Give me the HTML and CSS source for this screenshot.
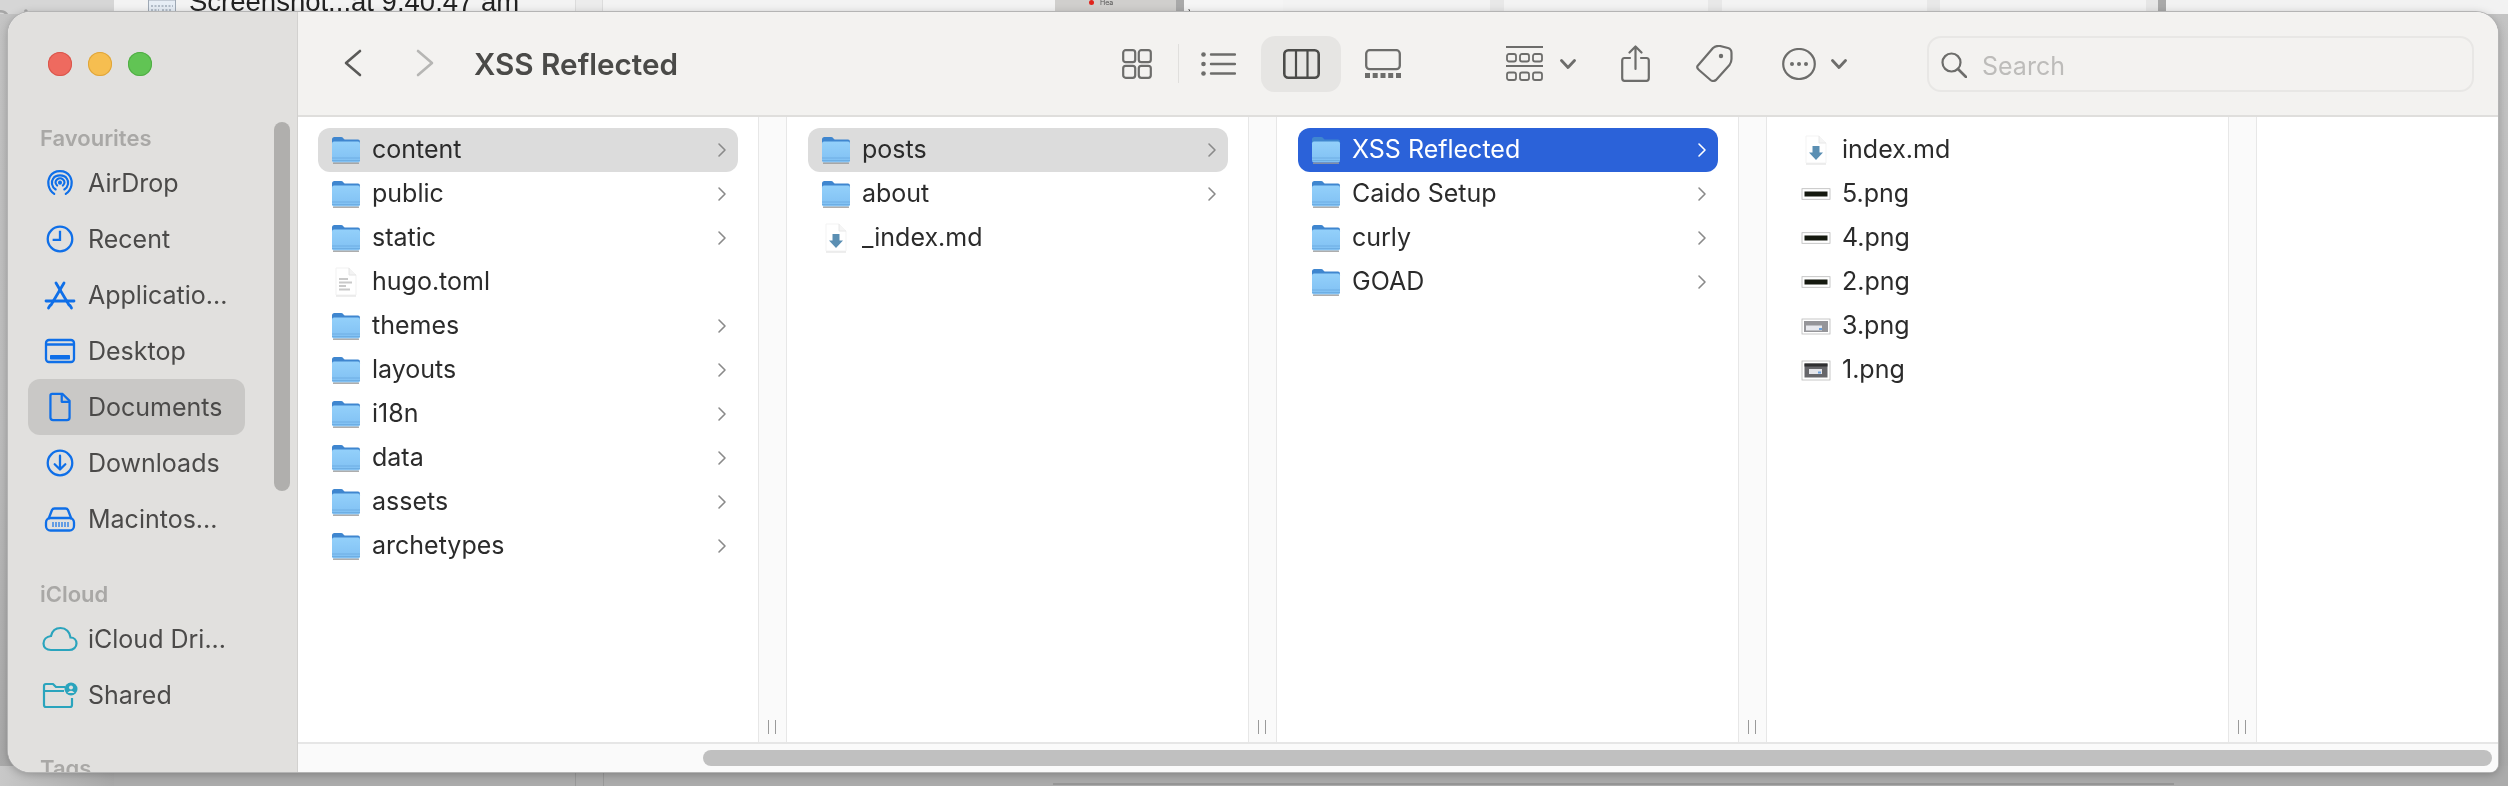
FILE: index.html
```html
<!DOCTYPE html>
<html lang="en">
<head>
<meta charset="utf-8">
<title>XSS Reflected</title>
<link rel="stylesheet" href="styles.css">
</head>
<body>
<svg class="defs" width="0" height="0" aria-hidden="true">
  <defs>
    <linearGradient id="fbody" x1="0" y1="0" x2="0" y2="1"><stop offset="0" stop-color="#93d0fa"/><stop offset="1" stop-color="#80c0f3"/></linearGradient>
    <symbol id="folder" viewBox="0 0 30 28">
      <path d="M1 3.500Q1 1 3.500 1H10Q11.500 1 12.500 2.400L13.600 3.600H27Q29 3.600 29 6V12H1Z" fill="#3f86cf"/>
      <rect x="1" y="5.600" width="28" height="21" rx="2" fill="url(#fbody)"/>
      <rect x="1" y="21.500" width="28" height="1" fill="#6eaee3"/>
      <rect x="1" y="24" width="28" height="1" fill="#6eaee3"/>
      <rect x="2" y="26.600" width="26" height="1.200" fill="#9a9a9a"/>
    </symbol>
    <symbol id="doc" viewBox="0 0 24 30">
      <path d="M2 1H15L22 8V28H2Z" fill="#fff" stroke="#f1f1f1"/>
      <path d="M15 1V8H22" fill="#f3f3f3" stroke="#e4e4e4"/>
      <path d="M2 29H22" stroke="#dedede"/>
      <path d="M5 12H14M5 15.500H18M5 19H12M5 22.500H16" stroke="#c9c9c9" stroke-width="1.800"/>
    </symbol>
    <symbol id="md" viewBox="0 0 24 30">
      <path d="M2 1H15L22 8V28H2Z" fill="#fff" stroke="#f3f3f3"/>
      <path d="M15 1V8H22" fill="#f5f5f5" stroke="#e8e8e8"/>
      <path d="M2 29H22" stroke="#dedede"/>
      <path d="M8.500 11H15.500V17.500H19L12 25L5 17.500H8.500Z" fill="#5b8fb3"/>
    </symbol>
    <symbol id="strip" viewBox="0 0 30 12">
      <rect x="1" y=".7" width="28" height="10.600" fill="#fff" stroke="#b9b9b9" stroke-width=".8"/>
      <rect x="3.500" y="3.500" width="23" height="5" fill="#15190f"/>
    </symbol>
    <symbol id="thumb3" viewBox="0 0 30 17">
      <rect x="1" y="1" width="28" height="15" fill="#fff" stroke="#b9b9b9" stroke-width=".8"/>
      <rect x="3" y="3" width="24" height="11" fill="#959599"/>
      <rect x="5" y="7.500" width="16" height="5" fill="#e8e9ee"/>
      <rect x="18" y="10" width="3" height="2" fill="#6aa0dc"/>
    </symbol>
    <symbol id="thumb1" viewBox="0 0 30 21">
      <rect x="1" y="1" width="28" height="19" fill="#fff" stroke="#b9b9b9" stroke-width=".8"/>
      <rect x="3.500" y="3.500" width="23" height="14" fill="#66666a"/>
      <rect x="3.500" y="3.500" width="23" height="3" fill="#2f2f31"/>
      <rect x="8" y="9" width="13" height="5" fill="#e4e5ea"/>
      <rect x="17" y="11.500" width="3" height="2" fill="#6aa0dc"/>
    </symbol>
    <symbol id="chev" viewBox="0 0 12 18">
      <path d="M3 3L9 9L3 15" fill="none" stroke="#8a8a8a" stroke-width="1.600" stroke-linecap="round" stroke-linejoin="round"/>
    </symbol>
  </defs>
</svg>

<div class="desktop">
  <div class="strip-top">
    <div class="seg seg-a"><span class="ghost">Ori</span></div>
    <div class="seg seg-b">
      <svg class="shot-thumb" viewBox="0 0 28 14"><rect x=".5" y="0" width="27" height="14" fill="#e6edf5" stroke="#9fa9b5"/><path d="M3 6H25M3 10H11M14 10H24" stroke="#7f8c9c" stroke-dasharray="2 1.500"/></svg>
      <span class="shot-name">Screenshot...at 9.40.47 am</span>
    </div>
    <div class="seg seg-c"></div>
    <div class="seg seg-d"></div>
    <div class="seg seg-e"><span class="red-dot"></span><span class="mini">Hea</span></div>
    <div class="seg seg-f"></div>
    <div class="seg seg-g"><span class="mini-dark">)</span></div>
    <div class="seg seg-h"></div>
    <div class="seg seg-i"></div>
    <div class="seg seg-j"></div>
    <div class="seg seg-k"></div>
    <div class="seg seg-l"></div>
    <div class="seg seg-m"></div>
    <div class="seg seg-n"></div>
    <div class="seg seg-f"></div>
    <div class="seg seg-o"></div>
  </div>
  <div class="strip-bottom">
    <div class="bseg bseg-a"></div>
    <div class="bseg bseg-b"></div>
    <div class="bseg bseg-d"></div>
    <div class="bseg bseg-c"><span class="bbar"></span></div>
  </div>

  <main class="window">
    <aside class="sidebar">
      <div class="lights"><span class="light red"></span><span class="light yellow"></span><span class="light green"></span></div>

      <h2 class="side-head head-first">Favourites</h2>
      <ul class="side-list">
        <li class="side-row"><svg class="side-icon" viewBox="-5 -6 46 50"><g fill="none" stroke="#0f6fe8" stroke-width="3" stroke-linecap="round"><path d="M10 34C1 28 0 17 4 10C10 0 26 0 32 10C36 17 35 28 26 34"/><path d="M12 28C6 24 5.500 17 8.500 13C12 7 24 7 27.500 13C30.500 17 30 24 24 28"/><path d="M14 22.500C11 20 11 16 14 14C16.500 12 20 12 22 14C25 16 25 20 22 22.500"/></g><circle cx="18" cy="18.500" r="2.800" fill="#0f6fe8"/></svg><span>AirDrop</span></li>
        <li class="side-row"><svg class="side-icon" viewBox="-4 -4 44 44"><g fill="none" stroke="#0f6fe8" stroke-width="2.800"><circle cx="18" cy="18" r="15"/><path d="M18 8V19H9"/></g></svg><span>Recent</span></li>
        <li class="side-row"><svg class="side-icon" viewBox="0 0 36 36"><g fill="none" stroke="#0f6fe8" stroke-width="2.800" stroke-linecap="round"><path d="M14 6L27 28"/><path d="M22 6L9 28"/><path d="M4 24H32"/><path d="M6.500 31L8 28.500M29.500 31L28 28.500"/></g></svg><span>Applicatio...</span></li>
        <li class="side-row"><svg class="side-icon" viewBox="0 0 36 36"><g fill="none" stroke="#0f6fe8" stroke-width="2.300"><rect x="4" y="7" width="28" height="22" rx="3"/><path d="M4 11.500H32"/></g><rect x="8" y="22" width="20" height="4.500" rx=".8" fill="#0f6fe8"/></svg><span>Desktop</span></li>
        <li class="side-row side-row-on"><svg class="side-icon" viewBox="-2.700 -2.700 41.400 41.400"><g fill="none" stroke="#0f6fe8" stroke-width="2.600" stroke-linejoin="round"><path d="M9 3H21L29 11V30Q29 33 26 33H10Q7 33 7 30V5Q7 3 9 3Z"/><path d="M20 3V12H29"/></g></svg><span>Documents</span></li>
        <li class="side-row"><svg class="side-icon" viewBox="-4 -4 44 44"><g fill="none" stroke="#0f6fe8" stroke-width="2.800" stroke-linecap="round" stroke-linejoin="round"><circle cx="18" cy="18" r="15"/><path d="M18 9V26M11.500 19.500L18 26L24.500 19.500"/></g></svg><span>Downloads</span></li>
        <li class="side-row"><svg class="side-icon" viewBox="0 0 36 36"><g fill="none" stroke="#0f6fe8" stroke-width="2.300" stroke-linejoin="round"><path d="M6.500 18L10 9Q10.700 7.500 12.500 7.500H23.500Q25.300 7.500 26 9L29.500 18"/><rect x="4" y="17" width="28" height="12.500" rx="4.500"/><path d="M11 21V26M14 21V26M17 21V26M20 21V26M23 21V26M26 21V26" stroke-width="1.200"/></g></svg><span>Macintos...</span></li>
      </ul>

      <h2 class="side-head head-next">iCloud</h2>
      <ul class="side-list">
        <li class="side-row"><svg class="side-icon" viewBox="0 0 36 36"><path d="M9 29H27C31.500 29 34.500 26 34.500 22.500C34.500 19 32 16.500 28.500 16.500C28 11 24 7 18.500 7C13 7 10 10.500 9 15C4.500 15.500 1.500 18.500 1.500 22.500C1.500 26.500 4.500 29 9 29Z" fill="none" stroke="#2aa4bd" stroke-width="2.200"/></svg><span>iCloud Dri...</span></li>
        <li class="side-row"><svg class="side-icon" viewBox="0 0 36 36"><g fill="none" stroke="#2aa4bd" stroke-width="2.200" stroke-linejoin="round"><path d="M30 21V28Q30 30 28 30H4Q2 30 2 28V9Q2 7 4 7H11L14 10H23"/><path d="M2 14H22"/></g><circle cx="29" cy="12" r="6.500" fill="#2aa4bd"/><circle cx="29" cy="10.500" r="2" fill="#e1e0de"/><path d="M25.500 16Q29 11.500 32.500 16Z" fill="#e1e0de"/></svg><span>Shared</span></li>
      </ul>

      <h2 class="side-head head-tags">Tags</h2>
      <div class="side-thumb"></div>
    </aside>

    <section class="main">
      <header class="toolbar">
        <svg class="nav-btn" viewBox="0 0 20 30"><path d="M17 3L3 15L17 27" fill="none" stroke="#5a5a58" stroke-width="2.600" stroke-linecap="round" stroke-linejoin="round"/></svg>
        <svg class="nav-btn nav-fwd" viewBox="0 0 20 30"><path d="M3 3L17 15L3 27" fill="none" stroke="#b6b6b4" stroke-width="2.600" stroke-linecap="round" stroke-linejoin="round"/></svg>
        <h1 class="title">XSS Reflected</h1>
        <div class="spacer"></div>
        <svg class="tb ic-grid" viewBox="0 0 30 30"><g fill="none" stroke="#6d6d6b" stroke-width="2.200"><rect x="1.200" y="1.200" width="12" height="12" rx="2.500"/><rect x="16.800" y="1.200" width="12" height="12" rx="2.500"/><rect x="1.200" y="16.800" width="12" height="12" rx="2.500"/><rect x="16.800" y="16.800" width="12" height="12" rx="2.500"/></g></svg>
        <span class="tb-div"></span>
        <svg class="tb ic-list" viewBox="0 0 35 24"><g fill="#6d6d6b"><circle cx="2.500" cy="2.500" r="2.300"/><circle cx="2.500" cy="12" r="2.300"/><circle cx="2.500" cy="21.500" r="2.300"/></g><path d="M10 2.500H34M10 12H34M10 21.500H34" stroke="#6d6d6b" stroke-width="2.400" stroke-linecap="round"/></svg>
        <div class="tb-active"><svg class="ic-cols" viewBox="0 0 37 30"><g fill="none" stroke="#4c4c4a" stroke-width="2.600"><rect x="1.300" y="1.300" width="34.400" height="27.400" rx="4"/><path d="M13 1.300V28.700M24.500 1.300V28.700" stroke-width="2.200"/></g></svg></div>
        <svg class="tb ic-gal" viewBox="0 0 36 29"><rect x="1.200" y="1.200" width="33.600" height="19" rx="3.500" fill="none" stroke="#6d6d6b" stroke-width="2.300"/><g fill="#6d6d6b"><rect x="0" y="24" width="5" height="5"/><rect x="7.700" y="24" width="5" height="5"/><rect x="15.500" y="24" width="5" height="5"/><rect x="23.200" y="24" width="5" height="5"/><rect x="31" y="24" width="5" height="5"/></g></svg>
        <svg class="tb ic-group" viewBox="0 0 37 35"><path d="M0 1H37M0 20H37" stroke="#6d6d6b" stroke-width="2.200"/><g fill="none" stroke="#6d6d6b" stroke-width="1.800"><rect x="1" y="8" width="9" height="7.500" rx="2"/><rect x="14" y="8" width="9" height="7.500" rx="2"/><rect x="27" y="8" width="9" height="7.500" rx="2"/><rect x="1" y="26.500" width="9" height="7.500" rx="2"/><rect x="14" y="26.500" width="9" height="7.500" rx="2"/><rect x="27" y="26.500" width="9" height="7.500" rx="2"/></g></svg>
        <svg class="tb ic-mini ic-mini-a" viewBox="0 0 16 10"><path d="M1.500 1.500L8 8.500L14.500 1.500" fill="none" stroke="#6d6d6b" stroke-width="2.800" stroke-linecap="round" stroke-linejoin="round"/></svg>
        <svg class="tb ic-share" viewBox="0 0 29 37"><g fill="none" stroke="#6d6d6b" stroke-width="2.200" stroke-linecap="round" stroke-linejoin="round"><path d="M9 13H3.500Q1.200 13 1.200 15.500V33Q1.200 35.800 3.500 35.800H25.500Q27.800 35.800 27.800 33V15.500Q27.800 13 25.500 13H20"/><path d="M14.500 1.500V24M8.500 7.500L14.500 1.500L20.500 7.500"/></g></svg>
        <svg class="tb ic-tag" viewBox="0 0 37 37"><path d="M1.500 21L17 3Q20 .5 24 1L32 3Q35.500 4 35.500 8V14Q35.500 17 33.500 20L20 35Q17 37 14.500 35L3 25Q.5 23 1.500 21Z" fill="none" stroke="#6d6d6b" stroke-width="2.200" stroke-linejoin="round"/><circle cx="25" cy="11" r="2.200" fill="#6d6d6b"/></svg>
        <svg class="tb ic-more" viewBox="0 0 34 32"><ellipse cx="17" cy="16" rx="15.800" ry="15" fill="none" stroke="#6d6d6b" stroke-width="2.200"/><g fill="#6d6d6b"><circle cx="10" cy="16" r="2"/><circle cx="17" cy="16" r="2"/><circle cx="24" cy="16" r="2"/></g></svg>
        <svg class="tb ic-mini ic-mini-b" viewBox="0 0 16 10"><path d="M1.500 1.500L8 8.500L14.500 1.500" fill="none" stroke="#6d6d6b" stroke-width="2.800" stroke-linecap="round" stroke-linejoin="round"/></svg>
        <div class="search">
          <svg class="ic-search" viewBox="0 0 26 26"><circle cx="10.500" cy="10.500" r="9" fill="none" stroke="#6d6d6b" stroke-width="2.200"/><path d="M17 17L25 25" stroke="#6d6d6b" stroke-width="2.600" stroke-linecap="round"/></svg>
          <span class="search-text">Search</span>
        </div>
      </header>

      <div class="browser">
        <div class="col col-first">
          <div class="row row-open"><svg class="ic-folder"><use href="#folder"/></svg><span class="name">content</span><svg class="ic-chev"><use href="#chev"/></svg></div>
          <div class="row"><svg class="ic-folder"><use href="#folder"/></svg><span class="name">public</span><svg class="ic-chev"><use href="#chev"/></svg></div>
          <div class="row"><svg class="ic-folder"><use href="#folder"/></svg><span class="name">static</span><svg class="ic-chev"><use href="#chev"/></svg></div>
          <div class="row"><svg class="ic-doc"><use href="#doc"/></svg><span class="name">hugo.toml</span></div>
          <div class="row"><svg class="ic-folder"><use href="#folder"/></svg><span class="name">themes</span><svg class="ic-chev"><use href="#chev"/></svg></div>
          <div class="row"><svg class="ic-folder"><use href="#folder"/></svg><span class="name">layouts</span><svg class="ic-chev"><use href="#chev"/></svg></div>
          <div class="row"><svg class="ic-folder"><use href="#folder"/></svg><span class="name">i18n</span><svg class="ic-chev"><use href="#chev"/></svg></div>
          <div class="row"><svg class="ic-folder"><use href="#folder"/></svg><span class="name">data</span><svg class="ic-chev"><use href="#chev"/></svg></div>
          <div class="row"><svg class="ic-folder"><use href="#folder"/></svg><span class="name">assets</span><svg class="ic-chev"><use href="#chev"/></svg></div>
          <div class="row"><svg class="ic-folder"><use href="#folder"/></svg><span class="name">archetypes</span><svg class="ic-chev"><use href="#chev"/></svg></div>
        </div>
        <div class="handle"><i></i></div>
        <div class="col">
          <div class="row row-open"><svg class="ic-folder"><use href="#folder"/></svg><span class="name">posts</span><svg class="ic-chev"><use href="#chev"/></svg></div>
          <div class="row"><svg class="ic-folder"><use href="#folder"/></svg><span class="name">about</span><svg class="ic-chev"><use href="#chev"/></svg></div>
          <div class="row"><svg class="ic-doc"><use href="#md"/></svg><span class="name">_index.md</span></div>
        </div>
        <div class="handle"><i></i></div>
        <div class="col">
          <div class="row row-sel"><svg class="ic-folder"><use href="#folder"/></svg><span class="name">XSS Reflected</span><svg class="ic-chev" viewBox="0 0 12 18"><path d="M3 3L9 9L3 15" fill="none" stroke="#fff" stroke-width="1.600" stroke-linecap="round" stroke-linejoin="round"/></svg></div>
          <div class="row"><svg class="ic-folder"><use href="#folder"/></svg><span class="name">Caido Setup</span><svg class="ic-chev"><use href="#chev"/></svg></div>
          <div class="row"><svg class="ic-folder"><use href="#folder"/></svg><span class="name">curly</span><svg class="ic-chev"><use href="#chev"/></svg></div>
          <div class="row"><svg class="ic-folder"><use href="#folder"/></svg><span class="name">GOAD</span><svg class="ic-chev"><use href="#chev"/></svg></div>
        </div>
        <div class="handle"><i></i></div>
        <div class="col">
          <div class="row"><svg class="ic-doc"><use href="#md"/></svg><span class="name">index.md</span></div>
          <div class="row"><svg class="ic-strip"><use href="#strip"/></svg><span class="name">5.png</span></div>
          <div class="row"><svg class="ic-strip"><use href="#strip"/></svg><span class="name">4.png</span></div>
          <div class="row"><svg class="ic-strip"><use href="#strip"/></svg><span class="name">2.png</span></div>
          <div class="row"><svg class="ic-t3"><use href="#thumb3"/></svg><span class="name">3.png</span></div>
          <div class="row"><svg class="ic-t1"><use href="#thumb1"/></svg><span class="name">1.png</span></div>
        </div>
        <div class="handle"><i></i></div>
        <div class="col col-last"></div>
      </div>

      <footer class="hbar"><div class="hthumb"></div></footer>
    </section>
  </main>
</div>
</body>
</html>
```

FILE: styles.css
```css
* { box-sizing: border-box; }
html, body { margin: 0; padding: 0; }
body { width: 2508px; height: 786px; overflow: hidden; background: #aaa; font-family: Inter, "Liberation Sans", sans-serif; }
.defs { position: absolute; }

.desktop { position: relative; width: 2508px; height: 786px; display: flex; flex-direction: column; justify-content: space-between; overflow: hidden; background: linear-gradient(180deg, #c4c4c4 0%, #bdbdbd 55%, #a8a8a8 100%); filter: blur(.35px); }

/* backdrop: the window behind this one */
.strip-top { display: flex; height: 14px; background: #f2f2f2; }
.seg { height: 14px; overflow: hidden; flex: none; }
.seg-a { width: 114px; background: #d6d6d6; position: relative; }
.ghost { position: absolute; left: -10px; top: 6px; font-size: 28px; color: #a6a6a6; line-height: 30px; }
.seg-b { width: 461px; display: flex; align-items: flex-start; padding-left: 34px; background: #f3f3f3; }
.shot-thumb { width: 28px; height: 14px; flex: none; }
.shot-name { margin-left: 13px; margin-top: -11px; font: 27.5px/26px "Liberation Sans", sans-serif; color: #222; white-space: nowrap; }
.seg-c { width: 28px; background: #ececec; border-left: 1px solid #dcdcdc; border-right: 1px solid #dcdcdc; }
.seg-d { width: 452px; background: #f3f3f3; }
.seg-e { width: 121px; background: #d0cfcd; display: flex; align-items: flex-start; }
.red-dot { width: 5px; height: 5px; border-radius: 50%; background: #e0231c; margin: 0 0 0 34px; }
.mini { font-size: 7px; line-height: 6px; color: #555; margin-left: 6px; }
.seg-f { width: 8px; background: #a9a9a9; }
.seg-g { width: 99px; background: #f5f5f5; }
.mini-dark { font-size: 9px; line-height: 6px; margin-left: 4px; color: #333; }
.seg-h { width: 207px; background: #f3f3f3; }
.seg-i { width: 14px; background: #e8e8e8; }
.seg-j { width: 204px; background: #f3f3f3; }
.seg-k { width: 14px; background: #e8e8e8; }
.seg-l { width: 205px; background: #f3f3f3; }
.seg-m { width: 13px; background: #e8e8e8; }
.seg-n { width: 206px; background: #f3f3f3; }
.seg-n + .seg-f { background: #e6e6e6; width: 12px; }
.seg-o { flex: 1; background: #f2f2f2; position: relative; box-shadow: inset 8px 0 0 #a9a9a9; }

.strip-bottom { display: flex; height: 20px; background: #ababab; }
.bseg { height: 20px; flex: none; }
.bseg-a { width: 114px; background: linear-gradient(90deg, #c8c8c8, #a9a9a9); }
.bseg-b { width: 461px; }
.bseg-d { width: 28px; border-left: 1px solid #999; }
.bseg-c { flex: 1; border-left: 1px solid #999; position: relative; }
.bbar { position: absolute; left: 449px; bottom: 1px; width: 1121px; height: 2px; background: #969696; }

/* window */
.window { position: absolute; left: 8px; top: 12px; width: 2490px; height: 760px; display: flex; border-radius: 22px 22px 8px 22px; overflow: hidden; background: #fff; box-shadow: 0 0 0 1px #b4b4b4, 0 2px 10px rgba(0,0,0,.28); }

.sidebar { position: relative; width: 290px; flex: none; background: #e1e0de; border-right: 1px solid #d2d1cf; overflow: hidden; }
.lights { display: flex; gap: 16px; padding: 40px 0 0 40px; height: 64px; }
.light { width: 24px; height: 24px; border-radius: 50%; }
.red { background: #ee6a5f; box-shadow: inset 0 0 0 1px #d9564c; }
.yellow { background: #f6be50; box-shadow: inset 0 0 0 1px #dfa53a; }
.green { background: #61c454; box-shadow: inset 0 0 0 1px #50ad45; }

.side-head { margin: 0 0 3px 32px; height: 28px; font-size: 22px; line-height: 28px; font-weight: 600; color: #a9a8a6; }
.head-first { margin-top: 48px; }
.head-next { margin-top: 33px; margin-bottom: 3px; }
.head-tags { margin-top: 31px; }
.side-list { list-style: none; margin: 0; padding: 0; }
.side-row { display: flex; align-items: center; gap: 10px; height: 56px; margin: 0 52px 0 20px; padding-left: 14px; border-radius: 12px; font-size: 25px; color: #4b4a49; white-space: nowrap; }
.side-row-on { background: #c9c8c6; }
.side-icon { width: 36px; height: 36px; flex: none; }
.side-thumb { position: absolute; left: 266px; top: 110px; width: 16px; height: 369px; border-radius: 8px; background: #b0afad; }

.main { flex: 1; min-width: 0; display: flex; flex-direction: column; }

.toolbar { height: 105px; flex: none; display: flex; align-items: center; padding: 0 24px 0 45px; background: #f3f2f0; border-bottom: 2px solid #dfdedc; }
.nav-btn { width: 20px; height: 30px; flex: none; margin-top: -1px; }
.nav-fwd { margin-left: 52px; }
.title { margin: 1px 0 0 39px; font-size: 29.7px; font-weight: 600; color: #4a4a48; white-space: nowrap; }
.spacer { flex: 1; }
.tb { flex: none; display: block; }
.ic-grid { width: 30px; height: 30px; }
.tb-div { width: 1px; height: 39px; margin-left: 26px; background: #e0dfdd; }
.ic-list { width: 35px; height: 24px; margin-left: 22px; }
.tb-active { width: 80px; height: 56px; margin-left: 25px; display: flex; align-items: center; justify-content: center; border-radius: 14px; background: #e6e5e3; }
.ic-cols { width: 37px; height: 30px; }
.ic-gal { width: 36px; height: 29px; margin-left: 24px; }
.ic-group { width: 37px; height: 35px; margin-left: 105px; }
.ic-mini { width: 16px; height: 10px; }
.ic-mini-a { margin-left: 17px; }
.ic-share { width: 29px; height: 37px; margin-left: 45px; }
.ic-tag { width: 37px; height: 37px; margin-left: 46px; }
.ic-more { width: 34px; height: 32px; margin-left: 49px; }
.ic-mini-b { margin-left: 15px; }
.search { width: 547px; height: 56px; margin-left: 80px; display: flex; align-items: center; padding-left: 12px; border: 2px solid #e8e7e5; border-radius: 14px; }
.ic-search { width: 26px; height: 26px; flex: none; margin-top: 2px; }
.search-text { margin: 4px 0 0 15px; font-size: 25px; color: #bdbcba; }

/* column browser */
.browser { flex: 1; min-height: 0; display: flex; background: #fff; }
.col { flex: none; width: 461px; padding: 11px 20px 0 21px; }
.col-first { width: 460px; padding: 11px 20px 0 20px; }
.col-last { flex: 1; }
.handle { position: relative; flex: none; width: 29px; background: #fafafa; border-left: 1px solid #e7e7e7; border-right: 1px solid #e7e7e7; }
.handle i { position: absolute; left: 9px; bottom: 8px; width: 8px; height: 14px; border-left: 1px solid #9a9a9a; border-right: 1px solid #9a9a9a; }
.row { display: flex; align-items: center; height: 44px; padding-left: 13px; border-radius: 12px; font-size: 25px; color: #2b2b2b; white-space: nowrap; }
.row-open { background: #dcdcdc; }
.row-sel { background: #2b62d9; color: #fff; }
.name { flex: 1; min-width: 0; margin-top: -2px; }
.ic-folder { width: 30px; height: 28px; flex: none; margin-right: 11px; }
.ic-doc { width: 24px; height: 30px; flex: none; margin: 0 14px 0 3px; }
.ic-strip { width: 30px; height: 12px; flex: none; margin-right: 11px; }
.ic-t3 { width: 30px; height: 17px; flex: none; margin-right: 11px; }
.ic-t1 { width: 30px; height: 21px; flex: none; margin-right: 11px; }
.ic-chev { width: 12px; height: 18px; flex: none; margin-right: 10px; }

.hbar { position: relative; height: 30px; flex: none; background: #fafafa; border-top: 2px solid #e6e6e6; }
.hthumb { position: absolute; left: 405px; right: 6px; top: 6px; height: 16px; border-radius: 8px; background: #c0c0c0; }
```
